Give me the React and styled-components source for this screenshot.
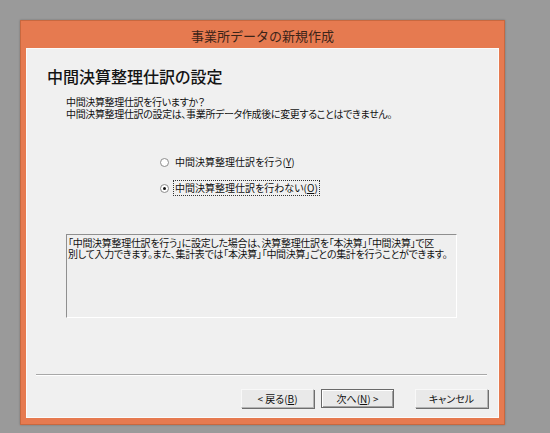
import React, { useState } from "react";
import styled, { createGlobalStyle } from "styled-components";

const GlobalStyle = createGlobalStyle`
  html, body {
    margin: 0;
    padding: 0;
    background: #9a9a9a;
  }
  body {
    width: 550px;
    height: 433px;
    overflow: hidden;
    font-family: "Noto Sans CJK JP", "Noto Sans", sans-serif;
  }
`;

const Screen = styled.div`
  width: 550px;
  height: 433px;
  padding: 20px 0 0 20px;
  box-sizing: border-box;
`;

const Window = styled.div`
  width: 485px;
  height: 405px;
  box-sizing: border-box;
  background: #e67a50;
  border: 1px solid #c8683f;
  box-shadow: 0 0 2px rgba(0, 0, 0, 0.25);
  display: flex;
  flex-direction: column;
  padding: 0 5px 6px 5px;
`;

const TitleBar = styled.div`
  height: 27px;
  display: flex;
  align-items: center;
  justify-content: center;
  font-size: 13px;
  color: #3c2418;
  padding-top: 1px;
  box-sizing: border-box;
`;

const Body = styled.div`
  flex: 1;
  background: #f0f0f0;
  border: 1px solid #fbfbfb;
  display: flex;
  flex-direction: column;
  color: #111;
  font-feature-settings: "palt";
`;

const Heading = styled.h1`
  margin: 19px 0 0 20px;
  font-size: 16px;
  line-height: 16px;
  font-weight: 500;
  color: #141414;
`;

const Lead = styled.div`
  margin: 12px 0 0 39px;
  font-size: 10px;
  line-height: 12px;
  letter-spacing: -0.35px;
`;

const Options = styled.div`
  margin: 35px 0 0 133px;
  display: flex;
  flex-direction: column;
  gap: 12px;
`;

const OptionRow = styled.label`
  display: flex;
  align-items: center;
  height: 14px;
  font-size: 10px;
  cursor: default;
`;

const Radio = styled.span`
  width: 9px;
  height: 9px;
  border-radius: 50%;
  box-sizing: border-box;
  border: 1px solid #8d8d8d;
  background: #fff;
  display: flex;
  align-items: center;
  justify-content: center;
  margin-right: 4px;
  flex: none;
  &::after {
    content: "";
    width: 3px;
    height: 3px;
    border-radius: 50%;
    background: ${(p) => (p.$checked ? "#111" : "transparent")};
  }
`;

const OptionText = styled.span`
  padding: 1px 1px;
  line-height: 12px;
  border: 1px dotted ${(p) => (p.$focused ? "#333" : "transparent")};
`;

const Note = styled.div`
  margin: 39px 0 0 39px;
  width: 391px;
  height: 84px;
  box-sizing: border-box;
  border-top: 1px solid #8f8f8f;
  border-left: 1px solid #8f8f8f;
  border-right: 1px solid #ffffff;
  border-bottom: 1px solid #ffffff;
  background: #efefef;
  padding: 2px 0 0 1px;
  font-size: 10px;
  line-height: 11px;
  letter-spacing: -0.3px;
`;

const Line = styled.div`
  white-space: nowrap;
`;

const Separator = styled.div`
  margin: 56px 0 0 9px;
  width: 451px;
  height: 1px;
  background: #a8a8a8;
  border-bottom: 1px solid #ffffff;
`;

const ButtonBar = styled.div`
  margin: 13px 10px 0 0;
  display: flex;
  justify-content: flex-end;
`;

const Button = styled.button`
  width: 73px;
  height: 19px;
  box-sizing: border-box;
  margin-left: ${(p) => p.$gap || 0}px;
  padding: 0;
  font-family: inherit;
  font-size: 10px;
  color: #111;
  background: #e9e9e9;
  border: 1px solid ${(p) => (p.$default ? "#6a6a6a" : "#b4b4b4")};
  border-top-color: ${(p) => (p.$default ? "#6a6a6a" : "#f8f8f8")};
  border-left-color: ${(p) => (p.$default ? "#6a6a6a" : "#f8f8f8")};
  box-shadow: ${(p) =>
    p.$default
      ? "inset 1px 1px 0 #fff, inset -1px -1px 0 #a0a0a0"
      : "1px 1px 0 #6e6e6e"};
  display: flex;
  align-items: center;
  justify-content: center;
  font-feature-settings: "palt";
`;

const Key = styled.span`
  text-decoration: underline;
`;

export default function App() {
  const [choice, setChoice] = useState("no");

  return (
    <Screen>
      <GlobalStyle />
      <Window>
        <TitleBar>事業所データの新規作成</TitleBar>
        <Body>
          <Heading>中間決算整理仕訳の設定</Heading>
          <Lead>
            <div>中間決算整理仕訳を行いますか？</div>
            <div>中間決算整理仕訳の設定は、事業所データ作成後に変更することはできません。</div>
          </Lead>
          <Options>
            <OptionRow onClick={() => setChoice("yes")}>
              <Radio $checked={choice === "yes"} />
              <OptionText $focused={choice === "yes"}>
                中間決算整理仕訳を行う(<Key>Y</Key>)
              </OptionText>
            </OptionRow>
            <OptionRow onClick={() => setChoice("no")}>
              <Radio $checked={choice === "no"} />
              <OptionText $focused={choice === "no"}>
                中間決算整理仕訳を行わない(<Key>O</Key>)
              </OptionText>
            </OptionRow>
          </Options>
          <Note>
            <Line>「中間決算整理仕訳を行う」に設定した場合は、決算整理仕訳を「本決算」「中間決算」で区</Line>
            <Line>別して入力できます。また、集計表では「本決算」「中間決算」ごとの集計を行うことができます。</Line>
          </Note>
          <Separator />
          <ButtonBar>
            <Button>
              &lt; 戻る(<Key>B</Key>)
            </Button>
            <Button $default $gap={7}>
              次へ(<Key>N</Key>) &gt;
            </Button>
            <Button $gap={21}>キャンセル</Button>
          </ButtonBar>
        </Body>
      </Window>
    </Screen>
  );
}
